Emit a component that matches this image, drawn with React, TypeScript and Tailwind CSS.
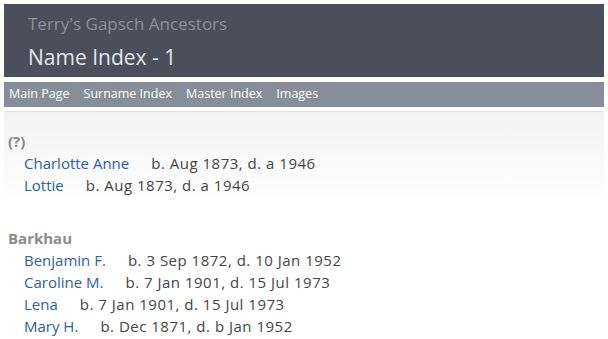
const groups: { surname: string; people: { name: string; dates: string }[] }[] = [
  {
    surname: "(?)",
    people: [
      { name: "Charlotte Anne", dates: "b. Aug 1873, d. a 1946" },
      { name: "Lottie", dates: "b. Aug 1873, d. a 1946" },
    ],
  },
  {
    surname: "Barkhau",
    people: [
      { name: "Benjamin F.", dates: "b. 3 Sep 1872, d. 10 Jan 1952" },
      { name: "Caroline M.", dates: "b. 7 Jan 1901, d. 15 Jul 1973" },
      { name: "Lena", dates: "b. 7 Jan 1901, d. 15 Jul 1973" },
      { name: "Mary H.", dates: "b. Dec 1871, d. b Jan 1952" },
    ],
  },
];

const NAV = ["Main Page", "Surname Index", "Master Index", "Images"];

export default function App() {
  return (
    <div className="w-[608px] h-[339px] overflow-hidden bg-white p-1 font-['Open_Sans',sans-serif]">
      <header className="h-[73px] bg-[#4a505b] px-6 pt-[9px]">
        <div className="text-[17px] leading-[22px] text-[#8b9099]">Terry's Gapsch Ancestors</div>
        <h1 className="mt-[8px] text-[21px] leading-[28px] text-[#e4e6ea]">Name Index - 1</h1>
      </header>

      <nav className="mt-[5px] h-[25px] bg-[#878e9a] flex items-center gap-[14px] px-[5px] text-[12.5px] text-white">
        {NAV.map((n) => (
          <a key={n} href="#">{n}</a>
        ))}
      </nav>

      <main className="mt-[4px] border-t border-[#dedede] bg-gradient-to-b from-[#f2f2f2] to-white to-[90px] pl-1 pt-[18px] text-[15px] leading-[22px]">
        {groups.map((g, i) => (
          <section key={g.surname} className={i > 0 ? "mt-[31px]" : ""}>
            <div className="font-bold text-[#8a8a8a]">{g.surname}</div>
            {g.people.map((p) => (
              <div key={p.name} className="pl-4">
                <a href="#" className="text-[#2d5f9e]">{p.name}</a>
                <span className="ml-[22px] tracking-[0.5px] text-[#444]">{p.dates}</span>
              </div>
            ))}
          </section>
        ))}
      </main>
    </div>
  );
}
